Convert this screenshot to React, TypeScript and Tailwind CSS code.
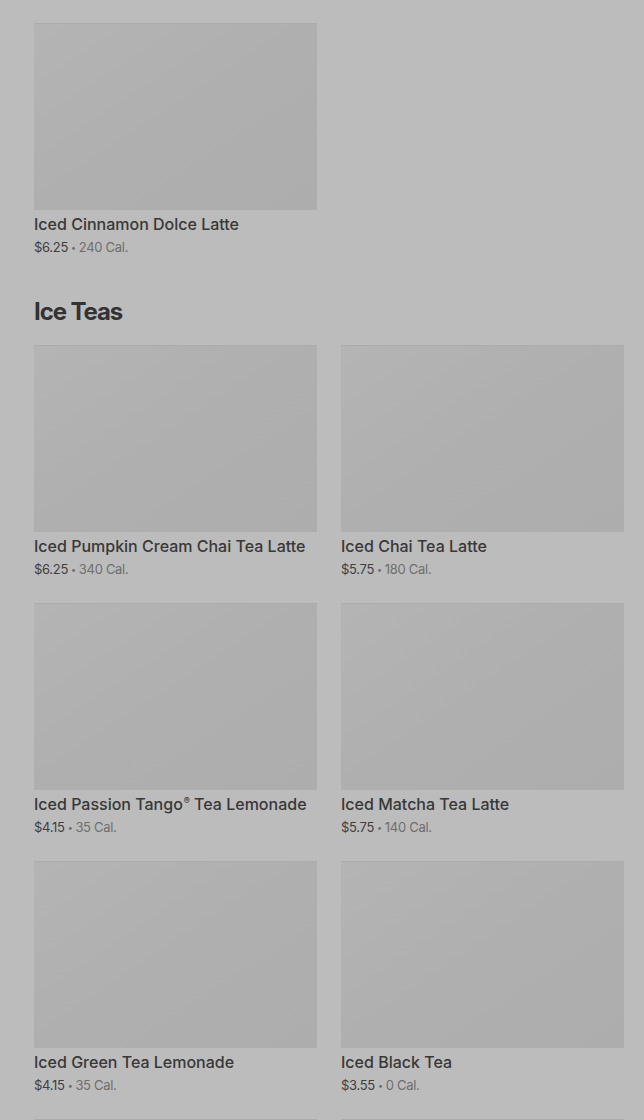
import React from "react";

type Item = { name: string; price: string; cal: string; reg?: boolean };

const first: Item[] = [{ name: "Iced Cinnamon Dolce Latte", price: "$6.25", cal: "240 Cal." }];

const teas: Item[] = [
  { name: "Iced Pumpkin Cream Chai Tea Latte", price: "$6.25", cal: "340 Cal." },
  { name: "Iced Chai Tea Latte", price: "$5.75", cal: "180 Cal." },
  { name: "Iced Passion Tango", price: "$4.15", cal: "35 Cal.", reg: true },
  { name: "Iced Matcha Tea Latte", price: "$5.75", cal: "140 Cal." },
  { name: "Iced Green Tea Lemonade", price: "$4.15", cal: "35 Cal." },
  { name: "Iced Black Tea", price: "$3.55", cal: "0 Cal." },
];

function Card({ item }: { item: Item }) {
  return (
    <div className="flex flex-col">
      <div className="h-[187px] w-full bg-gradient-to-br from-[#b4b4b4] via-[#afafaf] to-[#adadad] border-t border-[#acacac]" />
      <div className="mt-[2px] h-6 text-[16px] leading-6 font-medium text-[#383838] whitespace-nowrap">
        {item.name}
        {item.reg && (
          <>
            <span className="inline-block align-top text-[9px] leading-none ml-[1px] mt-[4px]">®</span> Tea Lemonade
          </>
        )}
      </div>
      <div className="h-[22px] text-[13px] leading-[22px] whitespace-nowrap tracking-[-0.3px]">
        <span className="text-[#3f3f3f]">{item.price}</span>
        <span className="inline-block align-middle leading-none text-[#6e6e6e] text-[9px] mx-[3px] -mt-[2px]">•</span>
        <span className="text-[#6e6e6e]">{item.cal}</span>
      </div>
    </div>
  );
}

export default function App() {
  return (
    <div
      className="min-h-[1120px] bg-[#bcbcbc] pl-[34px] pr-[20px] pt-[23px] pb-[40px]"
      style={{ fontFamily: "Inter, 'Noto Sans', sans-serif" }}
    >
      <div className="grid grid-cols-2 gap-x-6 gap-y-[23px]">
        {first.map((it, i) => (
          <Card key={i} item={it} />
        ))}
      </div>
      <h2 className="mt-[38px] mb-[17px] h-8 text-[24px] leading-8 font-bold tracking-[-1.1px] text-[#333333]">Ice Teas</h2>
      <div className="grid grid-cols-2 gap-x-6 gap-y-[23px]">
        {teas.map((it, i) => (
          <Card key={i} item={it} />
        ))}
        <div className="h-[187px] bg-gradient-to-br from-[#b4b4b4] via-[#afafaf] to-[#adadad] border-t border-[#acacac]" />
        <div className="h-[187px] bg-gradient-to-br from-[#b4b4b4] via-[#afafaf] to-[#adadad] border-t border-[#acacac]" />
      </div>
    </div>
  );
}
